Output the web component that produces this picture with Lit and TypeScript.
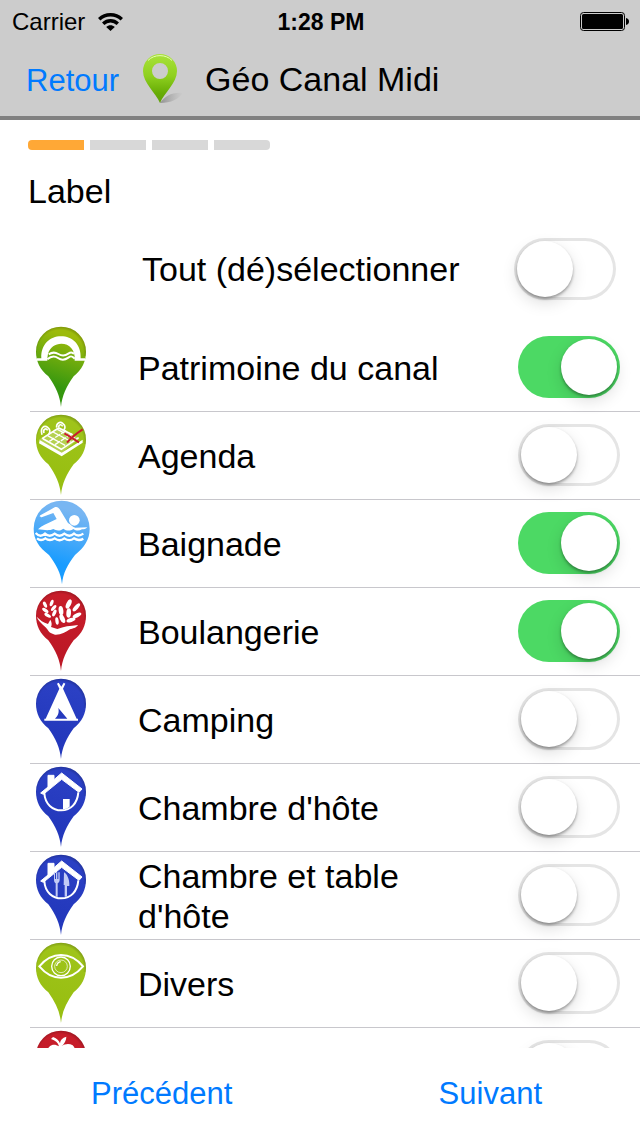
import { LitElement, html, svg, css, TemplateResult, SVGTemplateResult } from 'lit';
import { customElement, property, state } from 'lit/decorators.js';

type PinName =
  | 'canal' | 'agenda' | 'swim' | 'bakery' | 'camping'
  | 'room' | 'table' | 'eye' | 'apple';

interface Category {
  id: string;
  name?: string;
  pin: PinName;
  on: boolean;
}

const COLORS: Record<PinName, [string, string]> = {
  canal: ['#9dbb0c', '#35970f'],
  agenda: ['#9fc41a', '#98bf12'],
  swim: ['#78b6f2', '#189cff'],
  bakery: ['#c71d2a', '#bd1826'],
  camping: ['#2b40c4', '#2338bc'],
  room: ['#2b40c4', '#2338bc'],
  table: ['#2b40c4', '#2338bc'],
  eye: ['#9fc41a', '#98bf12'],
  apple: ['#c71d2a', '#bd1826'],
};

const house = svg`
  <path d="M62 96 L84 78 V43 H102 V56 L125 36 L186 84 L177 94 L125 55 L70 100 Z" fill="#fff" stroke="#fff" stroke-width="3" stroke-linejoin="round"/>
  <path d="M73 96 C75 130 98 148 124 148 C152 148 172 128 175 94" fill="none" stroke="#fff" stroke-width="6"/>`;

const leaf = (x: number, y: number, rx: number, ry: number, a: number) =>
  svg`<ellipse cx=${x} cy=${y} rx=${rx} ry=${ry} transform="rotate(${a} ${x} ${y})"/>`;

const GLYPHS: Record<PinName, SVGTemplateResult> = {
  canal: svg`
    <path d="M64 112 C62 70 90 46 123 46 C157 46 184 70 182 112 H195 V119 H164 C167 86 148 68 124 68 C106 68 90 78 84 98 L82 112 V119 H50 V112 Z" fill="#fff"/>
    <path d="M86 100 C98 92 105 93 115 99 S135 105 145 98 S156 95 162 98 M82 115 C94 104 104 104 114 111 S134 118 145 110 S158 108 164 113" fill="none" stroke="#fff" stroke-width="6"/>`,
  agenda: svg`
    <path d="M56 92 L118 53 L178 88 L121 136 Z" fill="#fff" opacity="0.25"/>
    <path d="M59 93 L125 131 L188 92 L188 101 L125 142 L57 103 Z" fill="#fff"/>
    <path d="M69 89 L124 121 L176 86 M66 89 L116 57 L158 77" fill="none" stroke="#fff" stroke-width="5"/>
    <path d="M83 80 L137 110 M99 69 L154 98 M112 61 L165 88 M88 97 L139 64 M105 107 L157 73" fill="none" stroke="#fff" stroke-width="4" stroke-dasharray="18 3"/>
    <path d="M66 77 C60 57 72 47 84 56 C91 61 91 70 86 76 M72 72 C68 60 78 56 83 64 M110 56 C108 42 120 36 129 44 C137 50 136 58 131 63 M116 54 C116 46 124 45 128 52" fill="none" stroke="#fff" stroke-width="5"/>
    <path d="M133 73 C149 80 162 92 177 100 M188 61 C168 74 154 85 141 101" fill="none" stroke="#c81e2b" stroke-width="6"/>`,
  swim: svg`
    <path d="M61 55 L104 31 C111 28 116 32 119 37 L144 78 C153 83 158 90 166 92 L202 91 C198 96 192 97 186 97 C176 103 168 101 160 96 C149 104 138 101 130 95 C119 103 108 101 100 96 C88 102 72 99 54 97 C65 86 82 80 96 73 L110 66 L100 48 L67 60 C60 62 57 58 61 55 Z" fill="#fff"/>
    <circle cx="163" cy="70" r="16" fill="#fff"/>
    <path d="M47 108 C56 118 66 118 75 110 C84 118 94 118 104 110 C113 118 124 118 133 110 C143 118 153 118 162 110 C171 118 180 117 190 110 M51 124 C59 131 67 131 76 124 C85 131 94 131 104 124 C113 131 124 131 133 124 C143 131 153 131 162 124 C171 130 180 131 190 125" fill="none" stroke="#fff" stroke-width="7"/>`,
  bakery: svg`
    <g fill="#fff">
      ${leaf(75, 59, 5, 10, -25)}${leaf(95, 54, 5, 10, 20)}
      ${leaf(76, 76, 5, 11, -55)}${leaf(101, 69, 5, 11, 40)}
      ${leaf(83, 91, 5, 11, -60)}${leaf(103, 84, 5, 11, 25)}
      ${leaf(146, 57, 7, 15, 25)}${leaf(169, 67, 6, 15, 42)}
      ${leaf(123, 77, 7, 14, -8)}${leaf(146, 84, 7, 14, 4)}
      ${leaf(171, 91, 6, 14, 65)}${leaf(127, 101, 7, 14, -25)}
      ${leaf(153, 105, 6, 14, 72)}${leaf(111, 108, 5, 11, -8)}
      <path d="M50 95 C60 105 70 113 84 117 L91 104 C96 111 96 121 93 126 L112 132 C131 124 150 123 174 120 C169 129 158 130 150 133 C137 142 122 150 105 149 C97 146 90 145 86 139 C78 123 59 116 50 95 Z"/>
    </g>`,
  camping: svg`
    <path d="M118 47 L111 32 L116 29 L124 41 L131 29 L136 32 L129 47 L170 137 H174 V143 H73 V137 H77 Z" fill="#fff"/>
    <path d="M105 137 C114 128 118 119 115 105 L142 137 Z" fill="#2539bd"/>`,
  room: svg`${house}<path d="M129 114 H149 V137 L140 143 L129 145 Z" fill="#fff"/>`,
  table: svg`${house}
    <g fill="#c3cbf5">
      <path d="M102 70 H105 V90 H108 V70 H112 V90 H115 V70 H119 V92 C119 98 116 101 113 103 V143 H107 V103 C104 101 102 98 102 92 Z"/>
      <path d="M132 70 C141 75 148 90 148 106 V111 H141 V143 H134 V108 H131 Z"/>
    </g>`,
  eye: svg`
    <path d="M58 88 C78 64 100 54 123 54 C147 54 169 64 189 88 C169 112 147 122 123 122 C100 122 78 112 58 88 Z" fill="none" stroke="#fff" stroke-width="6"/>
    <circle cx="123" cy="88" r="28" fill="none" stroke="#fff" stroke-width="4"/>
    <circle cx="123" cy="88" r="19" fill="none" stroke="#fff" stroke-width="2"/>
    <path d="M110 87 C111 80 116 75 122 74" fill="none" stroke="#fff" stroke-width="4"/>`,
  apple: svg`
    <path d="M117 64 C114 52 106 46 93 42 L99 36 C109 39 117 46 120 55 C121 45 127 38 139 35 C139 46 133 57 124 64 C135 56 148 55 158 61 C172 72 170 112 150 130 C138 138 128 132 121 132 C112 132 104 138 94 130 C76 112 74 78 88 65 C98 56 108 59 117 64 Z" fill="#fff"/>`,
};

@customElement('map-pin')
export class MapPin extends LitElement {
  @property() name: PinName = 'canal';

  static styles = css`
    :host { display: block; }
    .pin { display: block; width: 62px; height: 87px; }
  `;

  render(): TemplateResult {
    const [top, bottom] = COLORS[this.name];
    const body = this.name === 'swim'
      ? 'M126 262 C123 228 108 202 87 174 C57 150 41 128 41 95 A84 84 0 0 1 209 95 C209 128 193 150 165 174 C143 202 129 228 126 262 Z'
      : 'M123 258 C120 225 107 197 85 166 C60 146 48 121 48 92 A75 75 0 0 1 198 92 C198 121 186 146 161 166 C139 197 126 225 123 258 Z';
    return html`
      <svg class="pin" viewBox="30 6 186 261" aria-hidden="true">
        <defs>
          <linearGradient id="fill" x1="0.6" y1="0" x2="0.4" y2="1">
            <stop offset="0.1" stop-color=${top}></stop>
            <stop offset="0.75" stop-color=${bottom}></stop>
          </linearGradient>
          <radialGradient id="rim" gradientUnits="userSpaceOnUse" cx="121" cy="96" r="80">
            <stop offset="0.86" stop-color="#000" stop-opacity="0"></stop>
            <stop offset="1" stop-color="#000" stop-opacity="0.22"></stop>
          </radialGradient>
        </defs>
        <path d=${body} fill="url(#fill)"></path>
        ${this.name === 'swim' ? '' : svg`<circle cx="123" cy="92" r="75" fill="url(#rim)" clip-path="inset(0 0 62px 0)"/>`}
        ${GLYPHS[this.name]}
      </svg>`;
  }
}

@customElement('app-root')
export class AppRoot extends LitElement {
  @state() private all = false;

  @state() private categories: Category[] = [
    { id: 'canal', name: 'Patrimoine du canal', pin: 'canal', on: true },
    { id: 'agenda', name: 'Agenda', pin: 'agenda', on: false },
    { id: 'baignade', name: 'Baignade', pin: 'swim', on: true },
    { id: 'boulangerie', name: 'Boulangerie', pin: 'bakery', on: true },
    { id: 'camping', name: 'Camping', pin: 'camping', on: false },
    { id: 'chambre', name: "Chambre d'hôte", pin: 'room', on: false },
    { id: 'table', name: "Chambre et table d'hôte", pin: 'table', on: false },
    { id: 'divers', name: 'Divers', pin: 'eye', on: false },
    { id: 'fruits', pin: 'apple', on: false },
  ];

  static styles = css`
    :host {
      display: flex;
      flex-direction: column;
      height: 100vh;
      overflow: hidden;
      background: #fff;
      color: #000;
      font-family: "Liberation Sans", Arial, sans-serif;
      font-size: 34px;
      line-height: 40px;
    }
    *, *::before { box-sizing: border-box; }
    .top {
      flex: none;
      background: #ccc;
      border-bottom: 4px solid #808080;
    }
    .status {
      display: grid;
      grid-template-columns: 1fr auto 1fr;
      align-items: center;
      height: 40px;
      padding: 2px 10px 0 12px;
      font-size: 24px;
    }
    .carrier { display: flex; align-items: center; gap: 13px; }
    .time { font-weight: bold; font-size: 23px; }
    .battery { justify-self: end; display: block; }
    .bar {
      display: flex;
      align-items: center;
      height: 76px;
      padding: 2px 26px 0;
    }
    .title { margin: 0 0 0 20px; font: inherit; }
    .logo { display: block; margin-left: 24px; }
    button {
      padding: 3px 0 0;
      border: 0;
      background: none;
      color: #007aff;
      font: inherit;
      font-size: 31px;
      cursor: pointer;
    }
    .steps {
      flex: none;
      display: flex;
      gap: 6px;
      margin: 0;
      padding: 20px 28px 0;
      list-style: none;
    }
    .step { width: 56px; height: 10px; background: #d8d8d8; }
    .step.current { background: #ffa836; }
    .step:first-child { border-radius: 4px 0 0 4px; }
    .step:last-child { border-radius: 0 4px 4px 0; }
    .heading {
      flex: none;
      margin: 0;
      padding: 21px 28px 0;
      font: inherit;
    }
    .all {
      flex: none;
      display: flex;
      align-items: center;
      justify-content: space-between;
      padding: 27px 24px 24px 142px;
    }
    .list {
      flex: 1;
      min-height: 0;
      margin: 0;
      padding: 0 0 0 30px;
      overflow-y: auto;
      scrollbar-width: none;
      list-style: none;
    }
    .row {
      display: flex;
      align-items: center;
      justify-content: space-between;
      height: 88px;
      padding: 0 20px 2px 0;
      border-bottom: 1px solid #c8c7cc;
    }
    .name { flex: 1; margin: 0 20px 0 46px; padding-top: 2px; }
    .switch {
      appearance: none;
      flex: none;
      width: 102px;
      height: 62px;
      margin: 0;
      padding: 3px;
      border-radius: 31px;
      background: #fff;
      box-shadow: inset 0 0 0 3px #e5e5e5;
      cursor: pointer;
    }
    .switch::before {
      content: "";
      display: block;
      width: 56px;
      height: 56px;
      border-radius: 50%;
      background: #fff;
      box-shadow: 0 2px 3px rgba(0, 0, 0, 0.34), 0 6px 16px rgba(0, 0, 0, 0.13);
    }
    .switch:checked { background: #4cd964; box-shadow: none; }
    .switch:checked::before { margin-left: auto; }
    .foot {
      flex: none;
      display: flex;
      align-items: center;
      justify-content: space-between;
      height: 88px;
      padding: 0 98px 0 91px;
    }
  `;

  private toggleAll(e: Event) {
    this.all = (e.target as HTMLInputElement).checked;
    this.categories = this.categories.map((c) => ({ ...c, on: this.all }));
  }

  private toggle(id: string, e: Event) {
    const on = (e.target as HTMLInputElement).checked;
    this.categories = this.categories.map((c) => (c.id === id ? { ...c, on } : c));
  }

  render(): TemplateResult {
    return html`
      <header class="top">
        <div class="status">
          <span class="carrier">
            <span>Carrier</span>
            <svg width="25" height="18" viewBox="0 0 25 18" aria-hidden="true">
              <g fill="none" stroke="#000" stroke-width="3.4">
                <path d="M1.2 6.300 C7.500 0.200 17.500 0.200 23.800 6.300"></path>
                <path d="M5.200 10.800 C9.400 6.800 15.600 6.800 19.800 10.800"></path>
              </g>
              <path d="M8.200 13.900 C10.800 11.600 14.200 11.600 16.800 13.900 L12.500 18 Z"></path>
            </svg>
          </span>
          <span class="time">1:28 PM</span>
          <svg class="battery" width="50" height="20" viewBox="0 0 50 20" aria-hidden="true">
            <rect x="0.5" y="0.5" width="44" height="18" rx="3" fill="none" stroke="#000"></rect>
            <rect x="2" y="2" width="41" height="15" rx="1.5"></rect>
            <path d="M46 6 C50 6.500 50 12.500 46 13 Z"></path>
          </svg>
        </div>
        <div class="bar">
          <button type="button">Retour</button>
          <svg class="logo" width="42" height="52" viewBox="0 0 42 52" aria-hidden="true">
            <defs>
              <linearGradient id="g" x1="0" y1="0" x2="0" y2="1">
                <stop offset="0" stop-color="#a9e23a"></stop>
                <stop offset="0.45" stop-color="#8fd01f"></stop>
                <stop offset="0.8" stop-color="#67ac05"></stop>
                <stop offset="1" stop-color="#5f9f0a"></stop>
              </linearGradient>
              <linearGradient id="s" x1="0" y1="0" x2="1" y2="0">
                <stop offset="0" stop-color="#777" stop-opacity="0.7"></stop>
                <stop offset="1" stop-color="#999" stop-opacity="0"></stop>
              </linearGradient>
            </defs>
            <path d="M17 50 C22 43 29 39 40 40 C36 46 28 50 17 50 Z" fill="url(#s)"></path>
            <path fill-rule="evenodd" fill="url(#g)" d="M17 50 C13 40 0 30 0 18 A17 17 0 0 1 34 18 C34 30 21 40 17 50 Z M9 18 a8 8 0 1 0 16 0 a8 8 0 1 0 -16 0 Z"></path>
            <path d="M5 7.500 C11 1 23 1 29 7.500" fill="none" stroke="#e4fbb4" stroke-width="1"></path>
          </svg>
          <h1 class="title">Géo Canal Midi</h1>
        </div>
      </header>
      <ol class="steps" aria-label="Progression">
        <li class="step current"></li><li class="step"></li><li class="step"></li><li class="step"></li>
      </ol>
      <h2 class="heading">Label</h2>
      <div class="all">
        <label for="all">Tout (dé)sélectionner</label>
        <input class="switch" id="all" type="checkbox" role="switch" .checked=${this.all} @change=${this.toggleAll}>
      </div>
      <ul class="list">
        ${this.categories.map((c) => html`
          <li class="row">
            <map-pin .name=${c.pin}></map-pin>
            ${c.name ? html`<label class="name" for=${c.id}>${c.name}</label>` : ''}
            <input class="switch" id=${c.id} type="checkbox" role="switch" aria-label=${c.name ?? c.id}
              .checked=${c.on} @change=${(e: Event) => this.toggle(c.id, e)}>
          </li>`)}
      </ul>
      <nav class="foot">
        <button type="button">Précédent</button>
        <button type="button">Suivant</button>
      </nav>`;
  }
}
